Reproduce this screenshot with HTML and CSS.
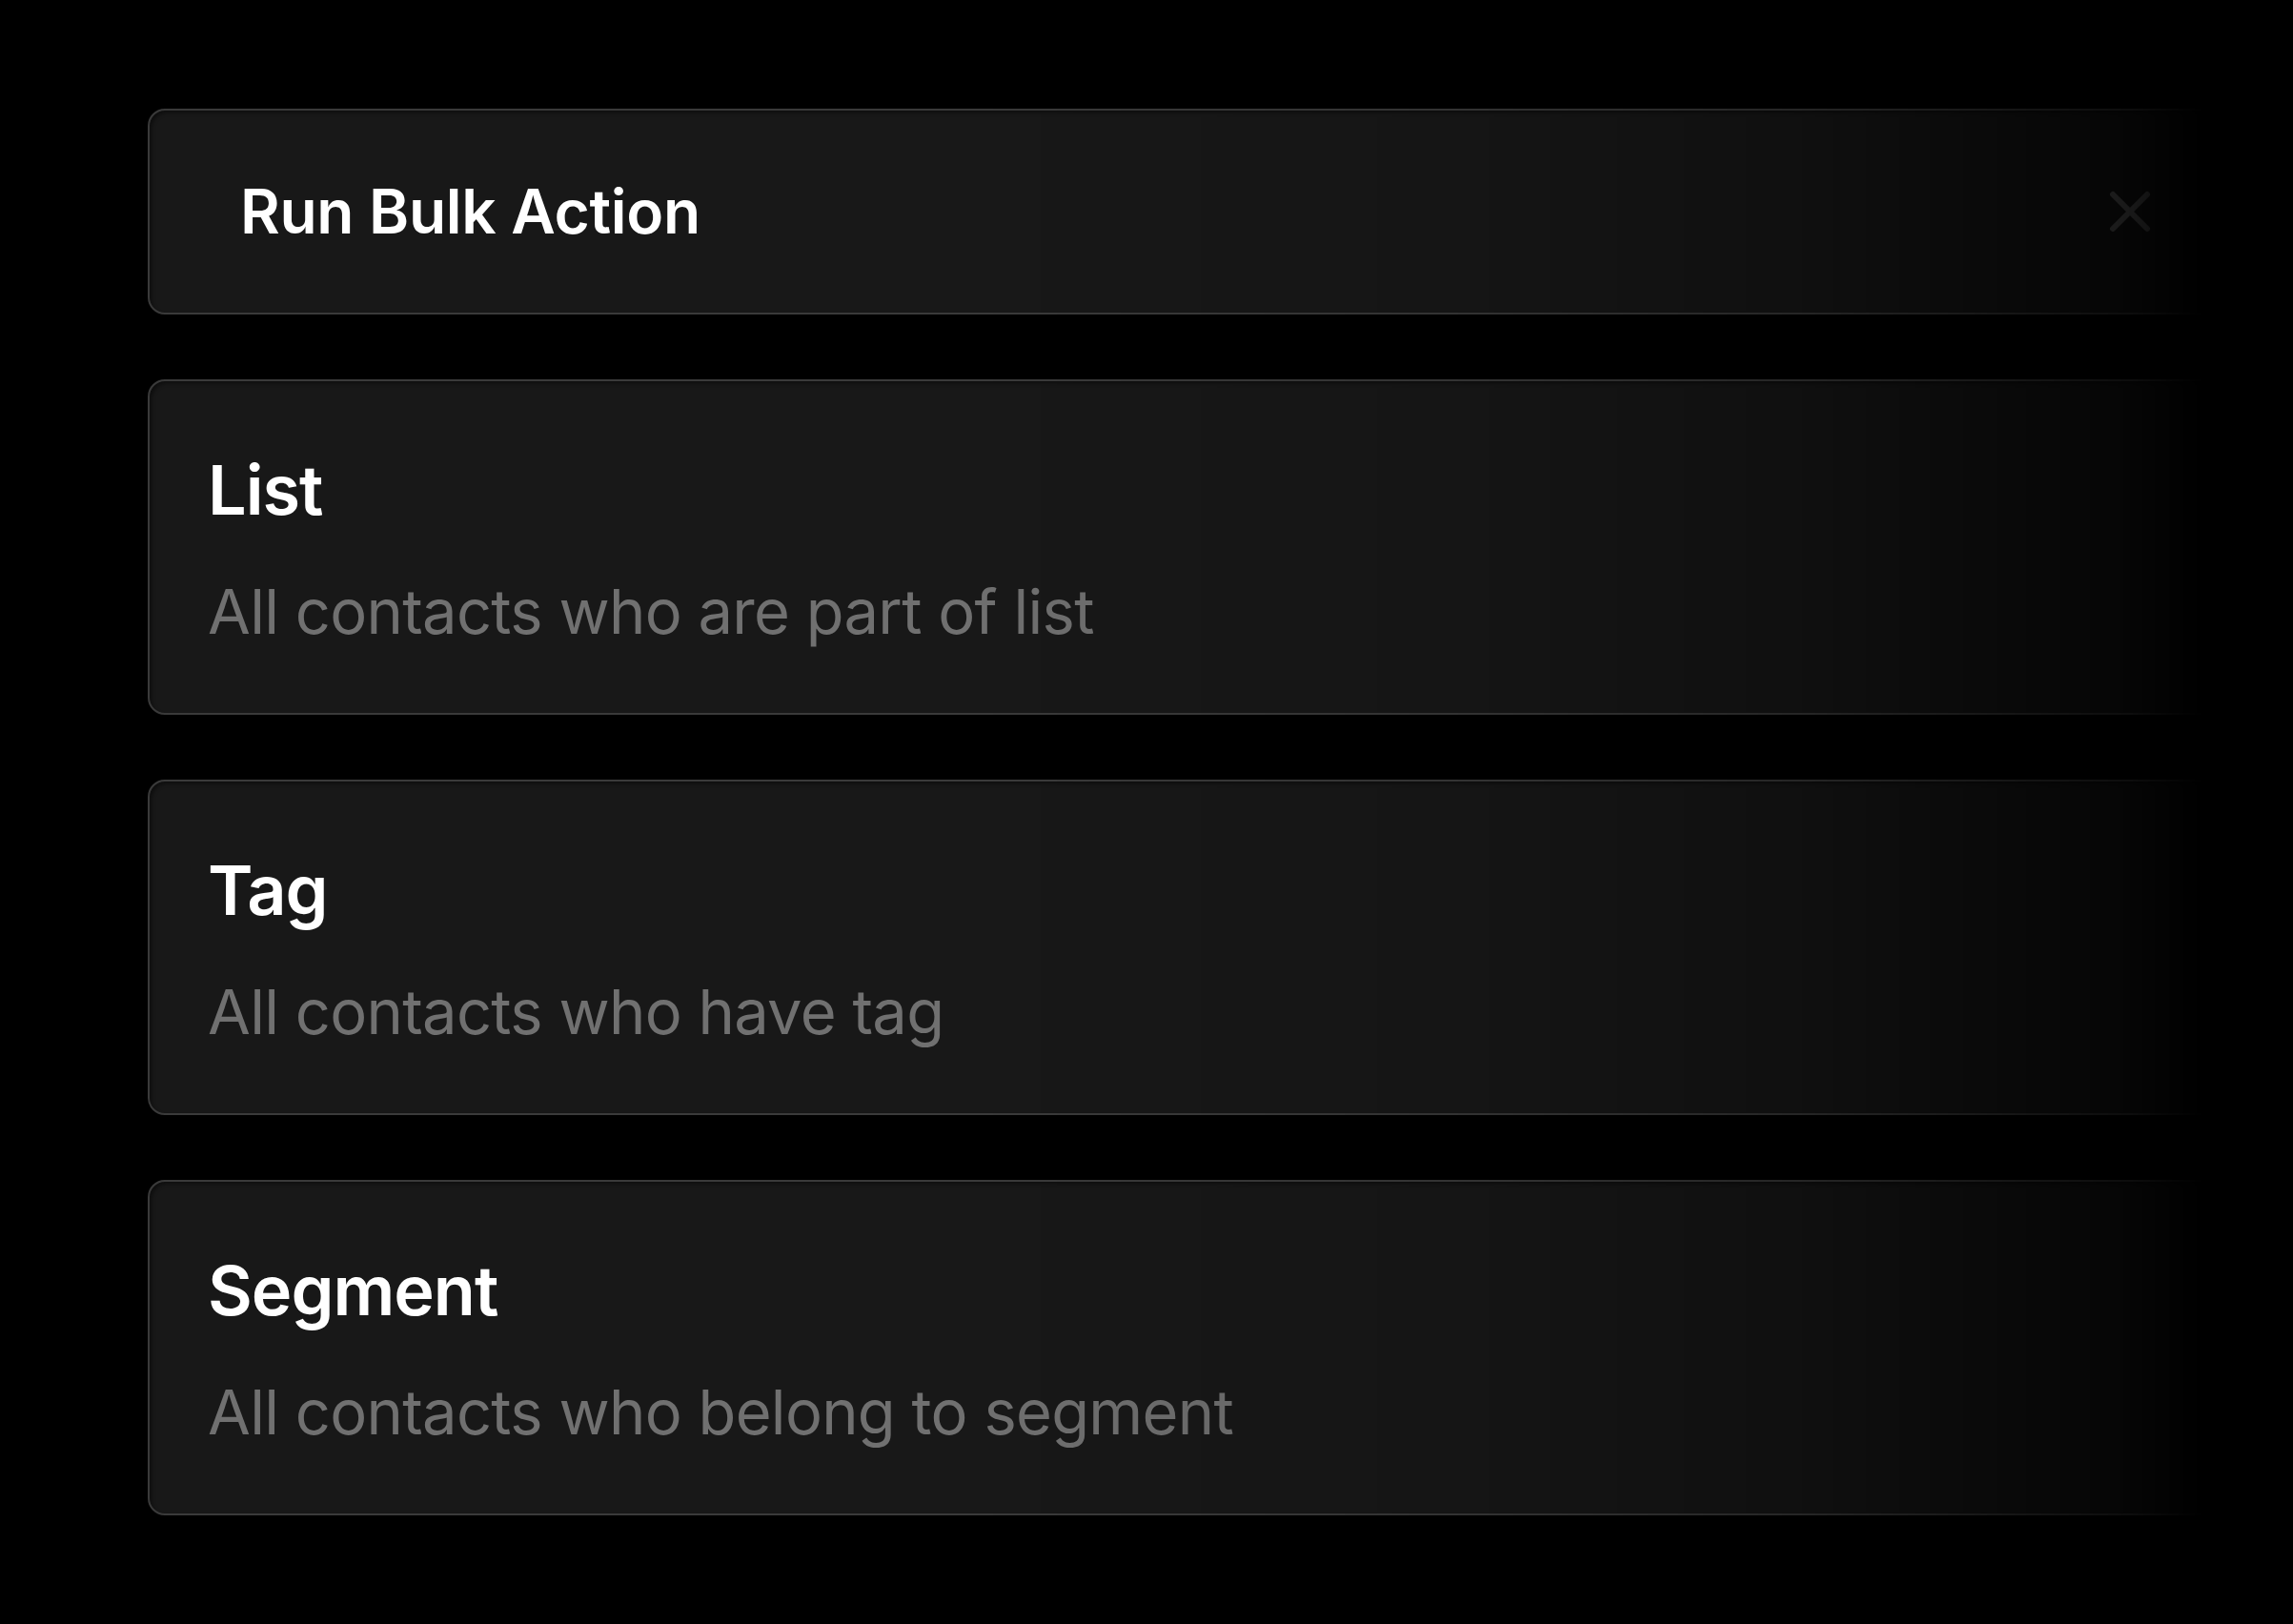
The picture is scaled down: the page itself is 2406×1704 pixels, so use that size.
FILE: index.html
```html
<!DOCTYPE html>
<html lang="en">
<head>
<meta charset="utf-8">
<title>Run Bulk Action</title>
<link rel="stylesheet" href="styles.css">
</head>
<body>
<main class="page">
  <div class="stack">
    <header class="card header">
      <h1 class="header-title">Run Bulk Action</h1>
      <button class="close" aria-label="Close">
        <svg viewBox="0 0 44 44" width="44" height="44" fill="none" stroke="currentColor" stroke-width="6" stroke-linecap="round">
          <path d="M4 4 L40 40 M40 4 L4 40"/>
        </svg>
      </button>
    </header>
    <section class="card option">
      <h2 class="option-title">List</h2>
      <p class="option-desc">All contacts who are part of list</p>
    </section>
    <section class="card option">
      <h2 class="option-title">Tag</h2>
      <p class="option-desc">All contacts who have tag</p>
    </section>
    <section class="card option">
      <h2 class="option-title">Segment</h2>
      <p class="option-desc">All contacts who belong to segment</p>
    </section>
  </div>
</main>
</body>
</html>
```

FILE: styles.css
```css
html, body {
  margin: 0;
  padding: 0;
  background: #000;
}
body {
  width: 2406px;
  height: 1704px;
  overflow: hidden;
  font-family: Inter, "Noto Sans", "Liberation Sans", sans-serif;
}
.page {
  padding: 114px 0 0 155px;
  -webkit-mask-image: linear-gradient(to right, #000 0, #000 1000px, rgba(0,0,0,.88) 1520px, rgba(0,0,0,.66) 1880px, rgba(0,0,0,.22) 2236px, transparent 2312px);
  mask-image: linear-gradient(to right, #000 0, #000 1000px, rgba(0,0,0,.88) 1520px, rgba(0,0,0,.66) 1880px, rgba(0,0,0,.22) 2236px, transparent 2312px);
}
.stack {
  width: 2200px;
  display: flex;
  flex-direction: column;
  gap: 68px;
}
.card {
  box-sizing: border-box;
  background: #181818;
  border: 2px solid #3a3a3a;
  border-radius: 18px;
  box-shadow: inset 3px 3px 4px -1px rgba(0,0,0,.45);
}
.header {
  height: 216px;
  display: flex;
  align-items: center;
  justify-content: space-between;
  padding: 0 96px 0 95px;
}
.header-title {
  margin: 0;
  color: #fff;
  font-size: 64px;
  font-weight: 600;
  line-height: 80px;
  letter-spacing: -0.3px;
}
.close {
  background: none;
  border: 0;
  padding: 0;
  width: 44px;
  height: 44px;
  color: #6f6f6f;
  display: flex;
}
.option {
  height: 352px;
  padding: 66px 66px 0 61px;
}
.option-title {
  margin: 0;
  color: #fff;
  font-size: 72px;
  font-weight: 600;
  line-height: 96px;
  letter-spacing: -1px;
}
.option-desc {
  margin: 36px 0 0;
  color: #707070;
  font-size: 65px;
  font-weight: 400;
  line-height: 88px;
  letter-spacing: -0.7px;
}
```
